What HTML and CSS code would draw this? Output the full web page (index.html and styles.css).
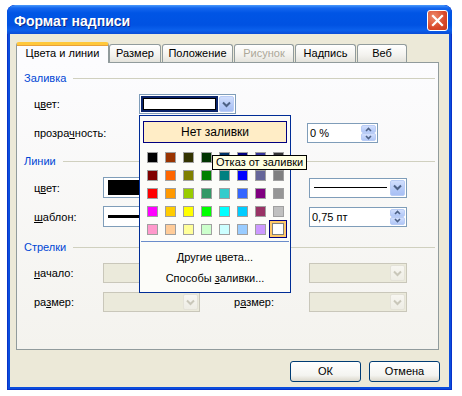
FILE: index.html
```html
<!DOCTYPE HTML>
<html>
  <head>
  <meta charset="utf-8" />
  <link rel="stylesheet" href="styles.css">
  </head>
  <body>
	  <div class="window">
		  <div class="titlebar">
			  <span class="title">Формат надписи</span>
			  <span class="close"><svg width="13" height="13" viewBox="0 0 13 13"><path d="M2 2 L11 11 M11 2 L2 11" stroke="#fff" stroke-width="2.2" stroke-linecap="square"/></svg></span>
		  </div>
		  <div class="client">
			  <div class="tabs">
				  <div class="tab active">Цвета и линии</div>
				  <div class="tab t2">Размер</div>
				  <div class="tab t3">Положение</div>
				  <div class="tab t4 off">Рисунок</div>
				  <div class="tab t5">Надпись</div>
				  <div class="tab t6">Веб</div>
			  </div>
			  <div class="panel">
				  <div class="section s1"><span>Заливка</span></div>
				  <div class="row r1">
					  <span class="lbl wide">ц<u>в</u>ет:</span>
					  <div class="combo focus w97">
						  <div class="field"><i class="sw white"></i></div>
						  <div class="dropbtn"><svg width="9" height="7" viewBox="0 0 9 7"><path d="M1 1.5 L4.5 5 L8 1.5" fill="none" stroke="#4D6185" stroke-width="2"/></svg></div>
					  </div>
				  </div>
				  <div class="row r2">
					  <span class="lbl wide">прозра<u>ч</u>ность:</span>
					  <div class="slider"></div>
					  <div class="spin w71">
						  <span class="val">0 %</span>
						  <div class="spinbtns">
							  <div class="sb"><svg width="7" height="5" viewBox="0 0 7 5"><path d="M1 4 L3.5 1.5 L6 4" fill="none" stroke="#4D6185" stroke-width="1.6"/></svg></div>
							  <div class="sb"><svg width="7" height="5" viewBox="0 0 7 5"><path d="M1 1 L3.5 3.5 L6 1" fill="none" stroke="#4D6185" stroke-width="1.6"/></svg></div>
						  </div>
					  </div>
				  </div>
				  <div class="section s2"><span>Линии</span></div>
				  <div class="row r3">
					  <span class="lbl">ц<u>в</u>ет:</span>
					  <div class="combo tall w97">
						  <div class="field"><i class="sw black"></i></div>
						  <div class="dropbtn"><svg width="9" height="7" viewBox="0 0 9 7"><path d="M1 1.5 L4.5 5 L8 1.5" fill="none" stroke="#4D6185" stroke-width="2"/></svg></div>
					  </div>
					  <span class="lbl right"></span>
					  <div class="combo w98">
						  <div class="field"><i class="line thin"></i></div>
						  <div class="dropbtn"><svg width="9" height="7" viewBox="0 0 9 7"><path d="M1 1.5 L4.5 5 L8 1.5" fill="none" stroke="#4D6185" stroke-width="2"/></svg></div>
					  </div>
				  </div>
				  <div class="row r4">
					  <span class="lbl"><u>ш</u>аблон:</span>
					  <div class="combo tall w97">
						  <div class="field"><i class="line thick"></i></div>
						  <div class="dropbtn"><svg width="9" height="7" viewBox="0 0 9 7"><path d="M1 1.5 L4.5 5 L8 1.5" fill="none" stroke="#4D6185" stroke-width="2"/></svg></div>
					  </div>
					  <span class="lbl right"></span>
					  <div class="spin w98">
						  <span class="val">0,75 пт</span>
						  <div class="spinbtns">
							  <div class="sb"><svg width="7" height="5" viewBox="0 0 7 5"><path d="M1 4 L3.5 1.5 L6 4" fill="none" stroke="#4D6185" stroke-width="1.6"/></svg></div>
							  <div class="sb"><svg width="7" height="5" viewBox="0 0 7 5"><path d="M1 1 L3.5 3.5 L6 1" fill="none" stroke="#4D6185" stroke-width="1.6"/></svg></div>
						  </div>
					  </div>
				  </div>
				  <div class="section s3"><span>Стрелки</span></div>
				  <div class="row r5">
					  <span class="lbl"><u>н</u>ачало:</span>
					  <div class="combo dis w97">
						  <div class="field"></div>
						  <div class="dropbtn"><svg width="9" height="7" viewBox="0 0 9 7"><path d="M1 1.5 L4.5 5 L8 1.5" fill="none" stroke="#C9C7BA" stroke-width="2"/></svg></div>
					  </div>
					  <span class="lbl right"></span>
					  <div class="combo dis w98">
						  <div class="field"></div>
						  <div class="dropbtn"><svg width="9" height="7" viewBox="0 0 9 7"><path d="M1 1.5 L4.5 5 L8 1.5" fill="none" stroke="#C9C7BA" stroke-width="2"/></svg></div>
					  </div>
				  </div>
				  <div class="row r6">
					  <span class="lbl">ра<u>з</u>мер:</span>
					  <div class="combo dis w97">
						  <div class="field"></div>
						  <div class="dropbtn"><svg width="9" height="7" viewBox="0 0 9 7"><path d="M1 1.5 L4.5 5 L8 1.5" fill="none" stroke="#C9C7BA" stroke-width="2"/></svg></div>
					  </div>
					  <span class="lbl right">р<u>а</u>змер:</span>
					  <div class="combo dis w98">
						  <div class="field"></div>
						  <div class="dropbtn"><svg width="9" height="7" viewBox="0 0 9 7"><path d="M1 1.5 L4.5 5 L8 1.5" fill="none" stroke="#C9C7BA" stroke-width="2"/></svg></div>
					  </div>
				  </div>

				  <div class="popup">
					  <div class="nofill">Нет заливки</div>
					  <div class="palette">
						  <span class="cell"><i style="background:#000000"></i></span>
						  <span class="cell"><i style="background:#993300"></i></span>
						  <span class="cell"><i style="background:#333300"></i></span>
						  <span class="cell"><i style="background:#003300"></i></span>
						  <span class="cell"><i style="background:#003366"></i></span>
						  <span class="cell"><i style="background:#000080"></i></span>
						  <span class="cell"><i style="background:#333399"></i></span>
						  <span class="cell"><i style="background:#333333"></i></span>
						  <span class="cell"><i style="background:#800000"></i></span>
						  <span class="cell"><i style="background:#FF6600"></i></span>
						  <span class="cell"><i style="background:#808000"></i></span>
						  <span class="cell"><i style="background:#008000"></i></span>
						  <span class="cell"><i style="background:#008080"></i></span>
						  <span class="cell"><i style="background:#0000FF"></i></span>
						  <span class="cell"><i style="background:#666699"></i></span>
						  <span class="cell"><i style="background:#808080"></i></span>
						  <span class="cell"><i style="background:#FF0000"></i></span>
						  <span class="cell"><i style="background:#FF9900"></i></span>
						  <span class="cell"><i style="background:#99CC00"></i></span>
						  <span class="cell"><i style="background:#339966"></i></span>
						  <span class="cell"><i style="background:#33CCCC"></i></span>
						  <span class="cell"><i style="background:#3366FF"></i></span>
						  <span class="cell"><i style="background:#800080"></i></span>
						  <span class="cell"><i style="background:#969696"></i></span>
						  <span class="cell"><i style="background:#FF00FF"></i></span>
						  <span class="cell"><i style="background:#FFCC00"></i></span>
						  <span class="cell"><i style="background:#FFFF00"></i></span>
						  <span class="cell"><i style="background:#00FF00"></i></span>
						  <span class="cell"><i style="background:#00FFFF"></i></span>
						  <span class="cell"><i style="background:#00CCFF"></i></span>
						  <span class="cell"><i style="background:#993366"></i></span>
						  <span class="cell"><i style="background:#C0C0C0"></i></span>
						  <span class="cell"><i style="background:#FF99CC"></i></span>
						  <span class="cell"><i style="background:#FFCC99"></i></span>
						  <span class="cell"><i style="background:#FFFF99"></i></span>
						  <span class="cell"><i style="background:#CCFFCC"></i></span>
						  <span class="cell"><i style="background:#CCFFFF"></i></span>
						  <span class="cell"><i style="background:#99CCFF"></i></span>
						  <span class="cell"><i style="background:#CC99FF"></i></span>
						  <span class="cell sel"><i style="background:#FFFFFF"></i></span>
					  </div>
					  <div class="sep"></div>
					  <div class="item"><u>Д</u>ругие цвета...</div>
					  <div class="item">Способы <u>з</u>аливки...</div>
				  </div>
				  <div class="tooltip">Отказ от заливки</div>
			  </div>
			  <div class="buttons">
				  <div class="btn">ОК</div>
				  <div class="btn">Отмена</div>
			  </div>
		  </div>
	  </div>
  </body>
</html>
```

FILE: styles.css
```css
body {
    margin: 0;
    background: #fff;
    font-family: "Liberation Sans", Arial, sans-serif;
    font-size: 11px;
    color: #000;
}
u { text-decoration: underline; text-underline-offset: 1px; }

.window {
    margin: 5px 0 0 7px;
    width: 445px;
    height: 385px;
    background: #0A4DDC;
    border-radius: 8px 8px 0 0;
    box-shadow: inset 0 0 0 1px #0831C9;
    overflow: hidden;
}
.titlebar {
    height: 29px;
    display: flex;
    align-items: center;
    justify-content: space-between;
    padding: 0 4px 0 7px;
    background: linear-gradient(#4A9AFB 0, #1466EE 3px, #0055E5 8px, #0052E2 20px, #0B60EC 25px, #0A4CD6 29px);
    border-radius: 8px 8px 0 0;
}
.title {
    color: #fff;
    font-weight: bold;
    font-size: 14px;
    margin-top: 2px;
    text-shadow: 1px 1px 0 #0A2A8A;
}
.close {
    width: 21px;
    height: 21px;
    box-sizing: border-box;
    margin-top: 2px;
    border: 1px solid #fff;
    border-radius: 3px;
    background: radial-gradient(circle at 30% 30%, #EE8A6A, #D8482A 60%, #C63A1C);
    display: flex;
    align-items: center;
    justify-content: center;
}

.client {
    margin: 0 3px;
    height: 353px;
    box-sizing: border-box;
    padding: 8px 10px 0 6px;
    background: #ECE9D8;
}

.tabs {
    display: flex;
    align-items: flex-end;
    height: 20px;
}
.tab {
    height: 18px;
    box-sizing: border-box;
    border: 1px solid #919B9C;
    border-bottom: none;
    border-radius: 3px 3px 0 0;
    background: linear-gradient(#FFFFFF, #F3F2EE 60%, #E4E3DC);
    text-align: center;
    line-height: 17px;
    margin-left: 1px;
}
.tab.active {
    width: 93px;
    height: 21px;
    margin-left: 0;
    margin-bottom: -1px;
    position: relative;
    z-index: 1;
    background: #FCFCFE;
    border-top: 3px solid #FFC83C;
    box-shadow: inset 0 1px 0 #E8A03A;
    line-height: 16px;
}
.tab.t2 { width: 52px; margin-left: 0; }
.tab.t3 { width: 71px; }
.tab.t4 { width: 60px; }
.tab.t5 { width: 61px; }
.tab.t6 { width: 50px; }
.tab.off { color: #ACA899; }

.panel {
    position: relative;
    width: 423px;
    height: 288px;
    box-sizing: border-box;
    border: 1px solid #919B9C;
    background: linear-gradient(#FCFCFE, #F4F3EE);
    padding: 7px 3px 0 7px;
}

.section {
    display: flex;
    align-items: center;
    height: 16px;
    color: #0046D5;
}
.section:after {
    content: "";
    flex: 1;
    height: 1px;
    margin-left: 7px;
    background: #D0D0BF;
}
.s2 { margin-top: 10px; }
.s3 { margin-top: 12px; }

.row {
    display: flex;
    align-items: center;
    height: 20px;
    padding-left: 10px;
}
.r1 { margin-top: 8px; }
.r2 { margin-top: 9px; }
.r3 { margin-top: 8px; height: 21px; }
.r4 { margin-top: 8px; height: 21px; }
.r5 { margin-top: 8px; }
.r6 { margin-top: 9px; }

.lbl { width: 69px; flex: none; }
.lbl.wide { width: 105px; }
.lbl.right { width: 75px; margin-left: 34px; }
.slider { width: 160px; height: 2px; margin-right: 8px; }

.w97 { width: 97px; }
.w98 { width: 98px; }
.w71 { width: 71px; }

.combo, .spin {
    display: flex;
    height: 20px;
    flex: none;
    box-sizing: border-box;
    border: 1px solid #7F9DB9;
    background: #fff;
    padding: 1px;
}
.combo.tall { height: 21px; }
.field {
    flex: 1;
    display: flex;
    align-items: center;
    padding: 0 1px;
}
.dropbtn {
    width: 15px;
    box-sizing: border-box;
    border: 1px solid #B9CCF5;
    border-radius: 2px;
    background: linear-gradient(#D2DFFD, #B4C9F7 60%, #A8BFF4);
    display: flex;
    align-items: center;
    justify-content: center;
}
.combo.focus .field {
    background: #0A246A;
    padding: 2px;
    margin-right: 1px;
}
.sw { display: block; flex: 1; align-self: stretch; box-sizing: border-box; }
.sw.white { background: #fff; border: 1px solid #000; }
.sw.black { background: #000; margin: 1px 2px; }
.line { display: block; flex: 1; background: #000; margin: 0 2px; }
.line.thin { height: 1px; }
.line.thick { height: 3px; }

.combo.dis { border-color: #C9C7BA; background: #EBEADB; }
.combo.dis .dropbtn {
    border-color: #E4E2D8;
    background: linear-gradient(#F7F6F1, #EEEDE5);
}

.spin .val { flex: 1; line-height: 16px; padding-left: 1px; }
.spinbtns {
    width: 15px;
    display: flex;
    flex-direction: column;
}
.sb {
    flex: 1;
    box-sizing: border-box;
    border: 1px solid #B9CCF5;
    border-radius: 2px;
    background: linear-gradient(#D2DFFD, #B0C6F6);
    display: flex;
    align-items: center;
    justify-content: center;
}

.popup {
    position: absolute;
    left: 122px;
    top: 52px;
    width: 152px;
    height: 178px;
    box-sizing: border-box;
    border: 1px solid #002D96;
    background: #FCFCF9;
    padding: 5px 3px 0 3px;
    z-index: 2;
}
.nofill {
    height: 22px;
    box-sizing: border-box;
    border: 1px solid #000080;
    background: #FFEDC6;
    text-align: center;
    line-height: 20px;
    font-size: 12px;
}
.palette {
    display: grid;
    grid-template-columns: repeat(8, 18px);
    grid-auto-rows: 18px;
    margin-top: 5px;
}
.cell {
    display: flex;
    align-items: center;
    justify-content: center;
    box-sizing: border-box;
}
.cell i {
    display: block;
    width: 11px;
    height: 11px;
    box-sizing: border-box;
    border: 1px solid #A0A0A0;
}
.cell.sel {
    border: 1px solid #000080;
    background: #FFC869;
}
.cell.sel i { width: 12px; height: 12px; border-color: #808080; }
.sep {
    height: 1px;
    margin: 3px -2px 0;
    background: #6A8CCB;
}
.item {
    height: 21px;
    line-height: 21px;
    text-align: center;
}
.sep + .item { margin-top: 5px; }

.tooltip {
    position: absolute;
    left: 195px;
    top: 92px;
    z-index: 3;
    border: 1px solid #000;
    background: #FFFFE1;
    padding: 0 3px;
    line-height: 13px;
    white-space: nowrap;
}

.buttons {
    display: flex;
    justify-content: flex-end;
    gap: 8px;
    margin: 11px -1px 0 0;
}
.btn {
    width: 71px;
    height: 21px;
    box-sizing: border-box;
    border: 1px solid #003C74;
    border-radius: 3px;
    background: linear-gradient(#FFFFFF, #F4F4F0 70%, #DCD8CC);
    text-align: center;
    line-height: 19px;
}
```
